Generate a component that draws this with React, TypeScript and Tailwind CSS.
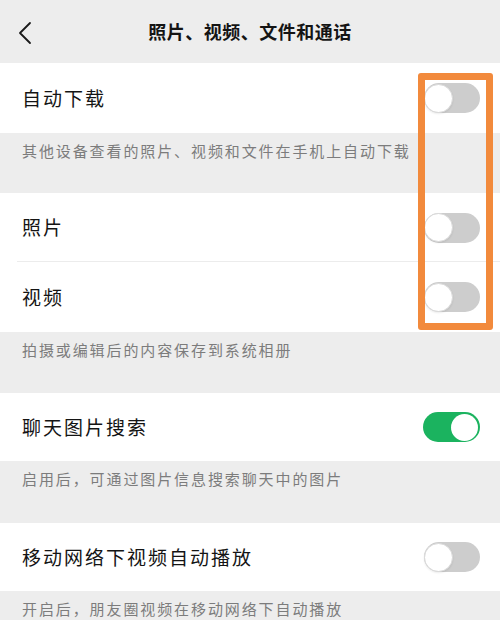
import React from "react";

function Toggle({ on }: { on?: boolean }) {
  if (on) {
    return (
      <div className="w-[57px] h-[30px] rounded-full bg-[#1bb35f] flex items-center justify-end pr-[2px]">
        <div className="w-[27px] h-[27px] rounded-full bg-white" />
      </div>
    );
  }
  return (
    <div className="w-[56px] h-[30px] rounded-full bg-[#cdcdcd] flex items-center">
      <div className="w-[29px] h-[29px] rounded-full bg-white border border-[#d9d9d9] shadow-[0_1px_2px_rgba(0,0,0,0.08)]" />
    </div>
  );
}

function Row({ label, on, h, divider }: { label: string; on?: boolean; h: string; divider?: boolean }) {
  return (
    <div className={`relative bg-white flex items-center justify-between pl-[22px] pr-[20px] ${h}`}>
      <span className="text-[19px] tracking-[2px] text-[#141414]">{label}</span>
      <Toggle on={on} />
      {divider && <div className="absolute bottom-0 left-[17px] right-0 h-px bg-[#ececec]" />}
    </div>
  );
}

function Desc({ text, h }: { text: string; h: string }) {
  return (
    <div className={`px-[22px] pt-[5px] ${h}`}>
      <span className="text-[15px] leading-[20px] tracking-[1.9px] text-[#7c7c7c]">{text}</span>
    </div>
  );
}

export default function App() {
  return (
    <div
      className="relative w-[500px] h-[620px] overflow-hidden bg-[#ededed]"
      style={{ fontFamily: '"Noto Sans CJK SC", "Noto Sans", sans-serif' }}
    >
      <div className="relative h-[63px] flex items-center justify-center">
        <svg className="absolute left-[16px] top-[21px]" width="18" height="24" viewBox="0 0 18 24" fill="none">
          <path d="M14 2 L4 12 L14 22" stroke="#1a1a1a" strokeWidth="1.8" strokeLinecap="round" strokeLinejoin="round" />
        </svg>
        <span className="text-[18px] font-bold tracking-[0.5px] text-[#141414]">照片、视频、文件和通话</span>
      </div>

      <Row label="自动下载" h="h-[70px]" />
      <Desc text="其他设备查看的照片、视频和文件在手机上自动下载" h="h-[60px]" />
      <Row label="照片" h="h-[69px]" divider />
      <Row label="视频" h="h-[70px]" />
      <Desc text="拍摄或编辑后的内容保存到系统相册" h="h-[61px]" />
      <Row label="聊天图片搜索" on h="h-[68px]" />
      <Desc text="启用后，可通过图片信息搜索聊天中的图片" h="h-[62px]" />
      <Row label="移动网络下视频自动播放" h="h-[68px]" />
      <Desc text="开启后，朋友圈视频在移动网络下自动播放" h="h-[40px]" />

      <div className="absolute left-[418px] top-[73px] w-[75px] h-[257px] border-[7px] border-[#f28a3c] rounded-[3px]" />
    </div>
  );
}
